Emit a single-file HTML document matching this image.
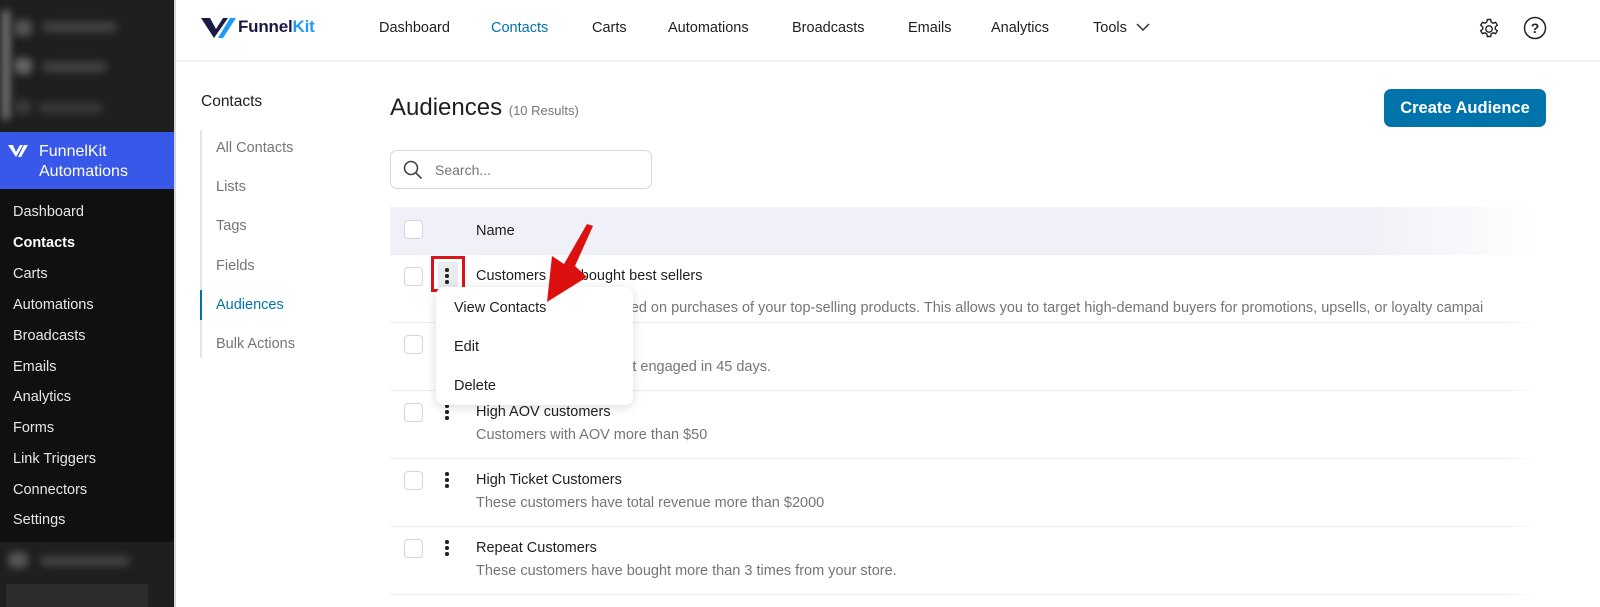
<!DOCTYPE html>
<html><head><meta charset="utf-8"><style>
*{box-sizing:border-box;margin:0;padding:0}
body{width:1600px;height:607px;overflow:hidden;font-family:"Liberation Sans",sans-serif;background:#fff;position:relative;color:#1e1e1e}
.abs{position:absolute}
#side{left:0;top:0;width:174px;height:607px;background:#101010}
.bl{position:absolute;background:#555;filter:blur(4px);border-radius:6px}
.menu a{position:absolute;left:13px;font-size:14.5px;color:#e6e6e6;text-decoration:none}
.top a{position:absolute;top:20px;font-size:14.5px;color:#1e1e1e}
.sub{position:absolute;left:216px;font-size:14.5px;color:#757575}
.row{position:absolute;left:390px;width:1150px;height:68px;border-bottom:1px solid #ececf1}
.cb{position:absolute;width:19px;height:19px;border:1.5px solid #d4d4e0;border-radius:4px;background:#fff}
.dots{position:absolute;left:445px;width:4px}
.dots i{display:block;width:3.5px;height:3.5px;background:#222;border-radius:50%;margin-bottom:2.5px}
.t1{position:absolute;left:476px;font-size:14.5px;color:#1e1e1e}
.t2{position:absolute;left:476px;font-size:14.5px;color:#757575;white-space:nowrap}
</style></head><body>
<div id="side" class="abs">
 <div class="abs" style="left:0;top:0;width:174px;height:132px;background:#1f1f1f"></div>
 <div class="bl" style="left:2px;top:10px;width:8px;height:110px;background:#777"></div>
 <div class="bl" style="left:14px;top:20px;width:18px;height:16px"></div>
 <div class="bl" style="left:42px;top:22px;width:75px;height:10px;background:#444"></div>
 <div class="bl" style="left:14px;top:58px;width:18px;height:16px;background:#666"></div>
 <div class="bl" style="left:42px;top:62px;width:65px;height:10px;background:#444"></div>
 <div class="bl" style="left:14px;top:100px;width:18px;height:14px;background:#3a3a3a"></div>
 <div class="bl" style="left:38px;top:103px;width:65px;height:10px;background:#3a3a3a"></div>
 <div class="abs" style="left:0;top:132px;width:174px;height:57px;background:#3858e9"></div>
 <svg class="abs" style="left:8px;top:144px" width="22" height="14" viewBox="0 0 22 14"><path d="M0 1h5l3 7 4-7h3l-7 12z" fill="#fff"/><path d="M16 1h4l-7 12h-3z" fill="#fff"/></svg>
 <div class="abs" style="left:39px;top:142px;font-size:16px;color:#fff;line-height:20px">FunnelKit<br>Automations</div>
 <div class="menu">
  <a style="top:204px">Dashboard</a><a style="top:235px;color:#fff;font-weight:bold">Contacts</a><a style="top:266px">Carts</a><a style="top:297px">Automations</a><a style="top:328px">Broadcasts</a><a style="top:359px">Emails</a><a style="top:389px">Analytics</a><a style="top:420px">Forms</a><a style="top:451px">Link Triggers</a><a style="top:482px">Connectors</a><a style="top:512px">Settings</a>
 </div>
 <div class="abs" style="left:0;top:542px;width:174px;height:65px;background:#1f1f1f"></div>
 <div class="bl" style="left:8px;top:552px;width:20px;height:16px"></div>
 <div class="bl" style="left:40px;top:556px;width:90px;height:10px;background:#444"></div>
 <div class="abs" style="left:6px;top:584px;width:142px;height:23px;background:#2c2c2c"></div>
</div>
<div class="abs" style="left:174px;top:0;width:2px;height:607px;background:#d8d8d8"></div>
<div class="abs" style="left:176px;top:60px;width:1424px;height:2px;background:#f0f0f0"></div>
<svg class="abs" style="left:201px;top:16px" width="36" height="24" viewBox="0 0 36 24"><path d="M0 2h9l6 11 7-11h5l-14 20z" fill="#1a1a47"/><path d="M29 2h6l-13 20h-5z" fill="#1e9af6"/></svg>
<div class="abs" style="left:238px;top:17px;font-size:17px;font-weight:bold;color:#1a1a47;letter-spacing:-.2px">Funnel<span style="color:#1e9af6">Kit</span></div>
<div class="top">
<a style="left:379px">Dashboard</a><a style="left:491px;color:#0073aa">Contacts</a><a style="left:592px">Carts</a><a style="left:668px">Automations</a><a style="left:792px">Broadcasts</a><a style="left:908px">Emails</a><a style="left:991px">Analytics</a><a style="left:1093px">Tools</a>
</div>
<svg class="abs" style="left:1136px;top:23px" width="14" height="9"><path d="M1 1l6 6 6-6" stroke="#333" stroke-width="1.5" fill="none"/></svg>
<svg class="abs" style="left:1477px;top:17px" width="24" height="24" viewBox="0 0 24 24" fill="none" stroke="#222" stroke-width="1.4"><circle cx="12" cy="12" r="3.2"/><path d="M10.3 2.5h3.4l.5 2.6 1.9 1.1 2.5-.9 1.7 2.9-2 1.7v2.2l2 1.7-1.7 2.9-2.5-.9-1.9 1.1-.5 2.6h-3.4l-.5-2.6-1.9-1.1-2.5.9-1.7-2.9 2-1.7v-2.2l-2-1.7 1.7-2.9 2.5.9 1.9-1.1z"/></svg>
<svg class="abs" style="left:1523px;top:16px" width="24" height="24" viewBox="0 0 24 24"><circle cx="12" cy="12" r="10.5" fill="none" stroke="#222" stroke-width="1.5"/><text x="12" y="17" text-anchor="middle" font-size="14" font-family="Liberation Sans" font-weight="bold" fill="#222">?</text></svg>
<div class="abs" style="left:201px;top:93px;font-size:15.5px">Contacts</div>
<div class="abs" style="left:200px;top:130px;width:2px;height:228px;background:#e4e4ea"></div>
<div class="abs" style="left:200px;top:290px;width:2px;height:30px;background:#0073aa"></div>
<div class="sub" style="top:140px">All Contacts</div><div class="sub" style="top:179px">Lists</div><div class="sub" style="top:218px">Tags</div><div class="sub" style="top:258px">Fields</div><div class="sub" style="top:297px;color:#0073aa">Audiences</div><div class="sub" style="top:336px">Bulk Actions</div>
<div class="abs" style="left:390px;top:94px;font-size:24px;color:#1e1e1e">Audiences <span style="font-size:13px;color:#757575">(10 Results)</span></div>
<div class="abs" style="left:1384px;top:89px;width:162px;height:38px;background:#0073aa;border-radius:7px;color:#fff;font-size:16.5px;font-weight:bold;text-align:center;line-height:38px">Create Audience</div>
<div class="abs" style="left:390px;top:150px;width:262px;height:39px;border:1px solid #d6d6de;border-radius:7px"></div>
<svg class="abs" style="left:403px;top:160px" width="20" height="20" viewBox="0 0 20 20" fill="none" stroke="#444" stroke-width="1.6"><circle cx="8" cy="8" r="6.5"/><path d="M13 13l5.5 5.5"/></svg>
<div class="abs" style="left:435px;top:162px;font-size:14px;color:#757575">Search...</div>
<div class="abs" style="left:390px;top:207px;width:1150px;height:48px;background:linear-gradient(90deg,#f0f0f8 85%,#fff)"></div>
<div class="cb" style="left:404px;top:220px"></div>
<div class="abs" style="left:476px;top:223px;font-size:14.5px">Name</div>
<div class="row" style="top:255px"></div><div class="row" style="top:323px"></div><div class="row" style="top:391px"></div><div class="row" style="top:459px"></div><div class="row" style="top:527px"></div>
<div class="cb" style="left:404px;top:267px"></div><div class="cb" style="left:404px;top:335px"></div><div class="cb" style="left:404px;top:403px"></div><div class="cb" style="left:404px;top:471px"></div><div class="cb" style="left:404px;top:539px"></div>
<div class="abs" style="left:438px;top:262px;width:20px;height:26px;background:#e8ecef;border-radius:3px"></div>
<div class="dots" style="top:268px"><i></i><i></i><i></i></div>
<div class="abs" style="left:431px;top:256px;width:34px;height:36px;border:3px solid #d8141b"></div>
<div class="dots" style="top:404px"><i></i><i></i><i></i></div><div class="dots" style="top:472px"><i></i><i></i><i></i></div><div class="dots" style="top:540px"><i></i><i></i><i></i></div>
<div class="t1" style="top:268px">Customers who bought best sellers</div>
<div class="t2" style="top:300px">Customers grouped based on purchases of your top-selling products. This allows you to target high-demand buyers for promotions, upsells, or loyalty campai</div>
<div class="t1" style="top:336px">Inactive Customers</div>
<div class="t2" style="top:359px">Customers who have not engaged in 45 days.</div>
<div class="t1" style="top:404px">High AOV customers</div>
<div class="t2" style="top:427px">Customers with AOV more than $50</div>
<div class="t1" style="top:472px">High Ticket Customers</div>
<div class="t2" style="top:495px">These customers have total revenue more than $2000</div>
<div class="t1" style="top:540px">Repeat Customers</div>
<div class="t2" style="top:563px">These customers have bought more than 3 times from your store.</div>
<div class="abs" style="left:1500px;top:255px;width:40px;height:340px;background:linear-gradient(90deg,rgba(255,255,255,0),#fff)"></div>
<div class="abs" style="left:436px;top:287px;width:197px;height:118px;background:#fff;border-radius:8px;box-shadow:0 2px 10px rgba(0,0,0,.15)"></div>
<div class="abs" style="left:454px;top:300px;font-size:14.5px">View Contacts</div>
<div class="abs" style="left:454px;top:339px;font-size:14.5px">Edit</div>
<div class="abs" style="left:454px;top:378px;font-size:14.5px">Delete</div>
<svg class="abs" style="left:0;top:0" width="1600" height="607"><path d="M593 226L575 266L587 277L547 302L552 256L564 264L587 224Z" fill="#dd1010"/></svg>
</body></html>
